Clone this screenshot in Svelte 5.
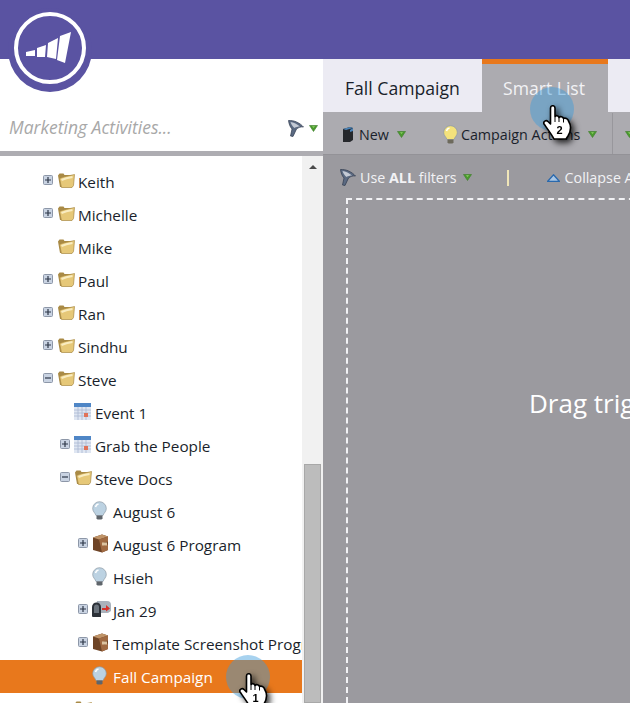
<script>
  const rows = [
    { label: "Keith", level: 0, toggle: "plus", icon: "folder" },
    { label: "Michelle", level: 0, toggle: "plus", icon: "folder" },
    { label: "Mike", level: 0, icon: "folder" },
    { label: "Paul", level: 0, toggle: "plus", icon: "folder" },
    { label: "Ran", level: 0, toggle: "plus", icon: "folder" },
    { label: "Sindhu", level: 0, toggle: "plus", icon: "folder" },
    { label: "Steve", level: 0, toggle: "minus", icon: "folder" },
    { label: "Event 1", level: 1, icon: "calendar" },
    { label: "Grab the People", level: 1, toggle: "plus", icon: "calendar" },
    { label: "Steve Docs", level: 1, toggle: "minus", icon: "folder" },
    { label: "August 6", level: 2, icon: "bulb" },
    { label: "August 6 Program", level: 2, toggle: "plus", icon: "box" },
    { label: "Hsieh", level: 2, icon: "bulb" },
    { label: "Jan 29", level: 2, toggle: "plus", icon: "mail" },
    { label: "Template Screenshot Program", level: 2, toggle: "plus", icon: "box" },
    { label: "Fall Campaign", level: 2, icon: "bulb", selected: true },
    { label: "", level: 1, icon: "folder" }
  ];
</script>

{#snippet arrow()}
  <svg class="arrow" width="9" height="7" viewBox="0 0 9 7">
    <path d="M0.500 0.500h8L4.500 6.500z" fill="#4a9a2e" stroke="#3d7d28" stroke-width="0.600" />
    <path d="M3 1.200h3L4.500 3z" fill="#8fd066" />
  </svg>
{/snippet}

{#snippet funnel()}
  <svg width="16" height="17" viewBox="0 0 16 17">
    <path d="M0.500 0.500C6 0 12 3 15.500 7c-2.500-.5-5 .5-7 2L5 16.500l-2.500-.5 1.500-7C2 7 1 4 0.500 0.500z" fill="#5b6a82" stroke="#2f3a4e" stroke-width="0.700" />
    <path d="M2.500 2c3 .3 7 2.300 9.500 4.500C10 6.500 8 7 6.500 8 4.500 6.500 3.300 4.300 2.500 2z" fill="#c4cad5" />
  </svg>
{/snippet}

{#snippet bulb(glass, base)}
  <svg width="15" height="19" viewBox="0 0 15 19">
    <path d="M7.500 0.700a6.800 6.800 0 0 0-6.800 6.800c0 3 2.500 4.500 3.300 7h7c.8-2.500 3.300-4 3.300-7A6.800 6.800 0 0 0 7.500 0.700z" fill={glass} stroke="#8d9aa5" stroke-width="0.700" />
    <path d="M3.500 6a4 4 0 0 1 3-3" stroke="#fff" stroke-width="1.600" fill="none" />
    <path d="M4.500 14.500h6v3l-1 1h-4l-1-1z" fill={base} />
  </svg>
{/snippet}

{#snippet rowIcon(kind)}
  {#if kind === "folder"}
    <svg width="18" height="16" viewBox="0 0 18 16">
      <path d="M1 3.500 2.500 1.500h4l1 1.500h7l1.500 1.500v9l-1 1.500H3z" fill="#a98a45" />
      <path d="M2.500 6.500c4-2 9-2.500 15-4l-1 11-1.500 2H4.500C3.500 12.500 3.500 9.500 2.500 6.500z" fill="#e6c878" stroke="#a98a45" stroke-width="0.700" />
      <path d="M4.500 8c3-1.500 7-2.500 11-3" stroke="#f9ecc0" stroke-width="2" fill="none" />
    </svg>
  {:else if kind === "calendar"}
    <svg width="17" height="17" viewBox="0 0 17 17">
      <rect width="17" height="17" fill="#dfe6f2" />
      <rect width="17" height="4" fill="#4f86c6" />
      <path d="M0 7h17M0 10h17M0 13h17M4 4v13M8 4v13M12 4v13" stroke="#a9b8d2" stroke-width="0.800" />
      <rect x="10" y="10" width="4" height="4" fill="#e0735a" />
    </svg>
  {:else if kind === "box"}
    <svg width="17" height="19" viewBox="0 0 17 19">
      <path d="M1 3.500 10 0.500l6 2v13.500l-6 2.500-9-2.500z" fill="#6e4426" />
      <path d="M1 3.500l9-3 6 2-9 3z" fill="#c09468" />
      <path d="M7 5.500l9-3v5l-4 1v3l4-1v5.500l-6 2.500z" fill="#a06a42" />
      <rect x="10" y="8.500" width="5" height="3" fill="#dcc3a0" />
    </svg>
  {:else if kind === "mail"}
    <svg width="19" height="18" viewBox="0 0 19 18">
      <path d="M5 1h10a4 4 0 0 1 4 4v6l-3 2H3z" fill="#aab2bc" />
      <path d="M0 7a4.500 4.500 0 0 1 9 0v10H1a1 1 0 0 1-1-1z" fill="#2c3138" />
      <path d="M2 7a2.500 2.500 0 0 1 5 0v6H2z" fill="#6a727b" />
      <path d="M10 8h4V5l4 3.500-4 3V10h-4z" fill="#d5332c" />
    </svg>
  {:else}
    {@render bulb("#bcd2e2", "#5f656b")}
  {/if}
{/snippet}

{#snippet hand(num)}
  <svg class="hand-svg" width="30" height="35" viewBox="0 0 30 35">
    <path d="M7.500 3C7.500 0 12 0 12 3V11.500C13 10 15.500 10.500 16 12.500 17 11 20 11.500 20.500 13.500 22 12.500 25 13.500 25.500 16 28 20 28 26 25 31L23 34H11C9 30 6 26 1 19 0 16.500 3 14.500 5 16.500L7.500 19Z" fill="#fff" stroke="#000" stroke-width="1.600" stroke-linejoin="round" />
    <path d="M12 12v5M16 13v4M20.500 14v3.500" stroke="#000" stroke-width="1" />
    <text x="16.500" y="29" class="hand-num">{num}</text>
  </svg>
{/snippet}

<div class="page">
  <header class="top"></header>

  <div class="logo">
    <svg width="84" height="84" viewBox="0 0 84 84">
      <circle cx="42" cy="42" r="42" fill="#5a53a2" />
      <circle cx="42" cy="40" r="34" fill="none" stroke="#fff" stroke-width="4" />
      <path d="M18 44l9-2v6h-9zM29 40l9-3-1 12h-8zM40 35l10-5-2 21-9-2zM52 28l11-4-6 31-8-3z" fill="#fff" />
    </svg>
  </div>

  <div class="main">
    <aside class="side">
      <div class="search">
        <span class="placeholder">Marketing Activities...</span>
        <span class="search-tools">{@render funnel()}{@render arrow()}</span>
      </div>
      <div class="tree-wrap">
        <ul class="tree">
          {#each rows as row}
            <li class="row level{row.level}" class:selected={row.selected}>
              <span class="toggle">
                {#if row.toggle}
                  <svg width="10" height="10" viewBox="0 0 10 10">
                    <rect x="0.500" y="0.500" width="9" height="9" rx="1" fill="#c9d3e2" stroke="#8d97a8" />
                    <path d={row.toggle === "plus" ? "M2 5h6M5 2v6" : "M2 5h6"} stroke="#2d3748" stroke-width="1.200" />
                  </svg>
                {/if}
              </span>
              <span class="row-icon">{@render rowIcon(row.icon)}</span>
              <span class="row-label">{row.label}</span>
            </li>
          {/each}
        </ul>
        <div class="scrollbar">
          <span class="scroll-up"></span>
          <div class="thumb"></div>
        </div>
      </div>
    </aside>

    <section class="content">
      <nav class="tabs">
        <div class="tab">Fall Campaign</div>
        <div class="tab active">Smart List</div>
      </nav>
      <div class="toolbar">
        <span class="tool new">
          <svg width="12" height="16" viewBox="0 0 12 16">
            <path d="M1 3l7-2 3 1v12l-3 2H1z" fill="#26282c" />
            <path d="M1 3l7-2 3 1-7 2z" fill="#4c84b8" />
            <path d="M8 4l3-2v3l-3 1z" fill="#4c84b8" />
          </svg>
          <span>New</span>
          {@render arrow()}
        </span>
        <span class="tool actions">
          {@render bulb("#f4e27c", "#6d6a5c")}
          <span>Campaign Actions</span>
          {@render arrow()}
        </span>
        <span class="tool-sep"></span>
        {@render arrow()}
      </div>
      <div class="canvas">
        <div class="filters">
          <span class="filter-use">
            {@render funnel()}
            <span>Use <b>ALL</b> filters</span>
            {@render arrow()}
          </span>
          <span class="filter-sep"></span>
          <span class="collapse">
            <svg width="13" height="8" viewBox="0 0 13 8"><path d="M6.500 0.800 12.500 7.500H0.500z" fill="#a9c6e4" stroke="#2a69ad" stroke-width="1.300" /></svg>
            <span>Collapse All</span>
          </span>
        </div>
        <div class="dropzone">Drag triggers here</div>
      </div>
    </section>
  </div>

  <div class="pointer one">
    <span class="halo"></span>
    <span class="hand">{@render hand(1)}</span>
  </div>
  <div class="pointer two">
    <span class="halo"></span>
    <span class="hand">{@render hand(2)}</span>
  </div>
</div>

<style>
  :global(body) {
    margin: 0;
    background: #fff;
  }
  .page {
    position: relative;
    width: 630px;
    height: 703px;
    overflow: hidden;
    font-family: "Open Sans", sans-serif;
    color: #1a1f2b;
  }
  .top {
    height: 59px;
    background: #5a53a2;
  }
  .logo {
    position: absolute;
    left: 8px;
    top: 8px;
    width: 84px;
    height: 84px;
  }
  .main {
    display: flex;
    height: 644px;
  }
  .side {
    width: 323px;
    display: flex;
    flex-direction: column;
    flex: none;
  }
  .search {
    height: 97px;
    flex: none;
    box-sizing: border-box;
    padding: 0 5px 0 9px;
    display: flex;
    align-items: flex-end;
    justify-content: space-between;
    border-bottom: 5px solid #aeadb2;
  }
  .placeholder {
    font-size: 17.5px;
    font-style: italic;
    color: #a8a8a8;
    line-height: 24px;
    margin-bottom: 12px;
  }
  .search-tools {
    display: flex;
    align-items: center;
    gap: 5px;
    margin-bottom: 14px;
  }
  .arrow {
    flex: none;
  }
  .tree-wrap {
    flex: 1;
    display: flex;
    min-height: 0;
  }
  .tree {
    list-style: none;
    margin: 0;
    padding: 9px 0 0;
    flex: 1;
    min-width: 0;
    overflow: hidden;
  }
  .row {
    height: 33px;
    display: flex;
    align-items: center;
    font-size: 15.3px;
    white-space: nowrap;
    box-sizing: border-box;
  }
  .level0 {
    padding-left: 43px;
  }
  .level1 {
    padding-left: 60px;
  }
  .level2 {
    padding-left: 78px;
  }
  .toggle {
    width: 14px;
    height: 12px;
    flex: none;
    display: flex;
    margin-top: -2px;
  }
  .row-icon {
    width: 21px;
    flex: none;
    display: flex;
    align-items: center;
    margin-top: -3px;
  }
  .selected {
    background: #e8781c;
    color: #fff;
  }
  .scrollbar {
    width: 21px;
    flex: none;
    background: #f1f1f1;
    padding-top: 9px;
    box-sizing: border-box;
    display: flex;
    flex-direction: column;
    align-items: center;
  }
  .scroll-up {
    width: 0;
    height: 0;
    border-left: 4px solid transparent;
    border-right: 4px solid transparent;
    border-bottom: 4px solid #4a4a4a;
  }
  .thumb {
    margin-top: 295px;
    width: 17px;
    flex: 1;
    box-sizing: border-box;
    background: #bcbcbc;
    border: 1px solid #a8a8a8;
  }
  .content {
    flex: 1;
    min-width: 0;
    background: #9b9a9f;
    display: flex;
    flex-direction: column;
  }
  .tabs {
    height: 53px;
    display: flex;
    background: #ecebf3;
    flex: none;
  }
  .tab {
    font-size: 17.6px;
    box-sizing: border-box;
    padding-top: 17px;
    padding-left: 22px;
    width: 159px;
  }
  .tab.active {
    width: 126px;
    padding-top: 12px;
    padding-left: 21px;
    border-top: 5px solid #e8781c;
    background: #acabb0;
    color: #f2f2f5;
  }
  .toolbar {
    height: 43px;
    flex: none;
    background: #acabb0;
    border-bottom: 1px solid #939297;
    box-sizing: border-box;
    display: flex;
    align-items: center;
    font-size: 14.3px;
    padding-left: 19px;
    padding-top: 2px;
    white-space: nowrap;
    overflow: hidden;
  }
  .tool {
    display: flex;
    align-items: center;
    gap: 5px;
  }
  .new .arrow {
    margin-left: 3px;
  }
  .actions .arrow {
    margin-left: 5px;
  }
  .actions {
    margin-left: 37px;
    gap: 3px;
  }
  .tool-sep {
    width: 1px;
    height: 43px;
    background: #98979c;
    margin: 0 12px 0 15px;
    flex: none;
  }
  .canvas {
    flex: 1;
    min-height: 0;
    padding: 0 0 0 23px;
    display: flex;
    flex-direction: column;
  }
  .filters {
    height: 43px;
    flex: none;
    display: flex;
    align-items: center;
    font-size: 14.3px;
    color: #f2f2f5;
    white-space: nowrap;
    padding-bottom: 0;
  }
  .filter-use {
    display: flex;
    align-items: center;
    gap: 4px;
    margin-left: -6px;
    margin-top: 2px;
  }
  .filter-use b {
    font-weight: 700;
  }
  .filter-use .arrow {
    margin-left: 2px;
  }
  .filter-sep {
    width: 2px;
    height: 16px;
    background: #f0e6b8;
    margin: 2px 38px 0 35px;
    flex: none;
  }
  .collapse {
    display: flex;
    align-items: center;
    gap: 5px;
    margin-top: 2px;
  }
  .dropzone {
    flex: 1;
    width: 400px;
    border: 2px dashed #f2f2f5;
    border-bottom: 0;
    box-sizing: border-box;
    font-size: 26px;
    color: #fff;
    padding: 185px 0 0 181px;
    white-space: nowrap;
  }
  .pointer {
    position: absolute;
    width: 44px;
    height: 60px;
  }
  .pointer.one {
    left: 226px;
    top: 655px;
  }
  .pointer.two {
    left: 530px;
    top: 87px;
  }
  .halo {
    position: absolute;
    left: 0;
    top: 0;
    width: 44px;
    height: 44px;
    border-radius: 50%;
    background: rgba(60, 155, 220, 0.45);
  }
  .hand {
    position: absolute;
    left: 13px;
    top: 18px;
    display: block;
    line-height: 0;
    filter: drop-shadow(3px 3px 3px rgba(0, 0, 0, 0.8));
  }
  .hand-num {
    font: 700 11px "Liberation Sans", sans-serif;
    fill: #000;
    text-anchor: middle;
  }
</style>
